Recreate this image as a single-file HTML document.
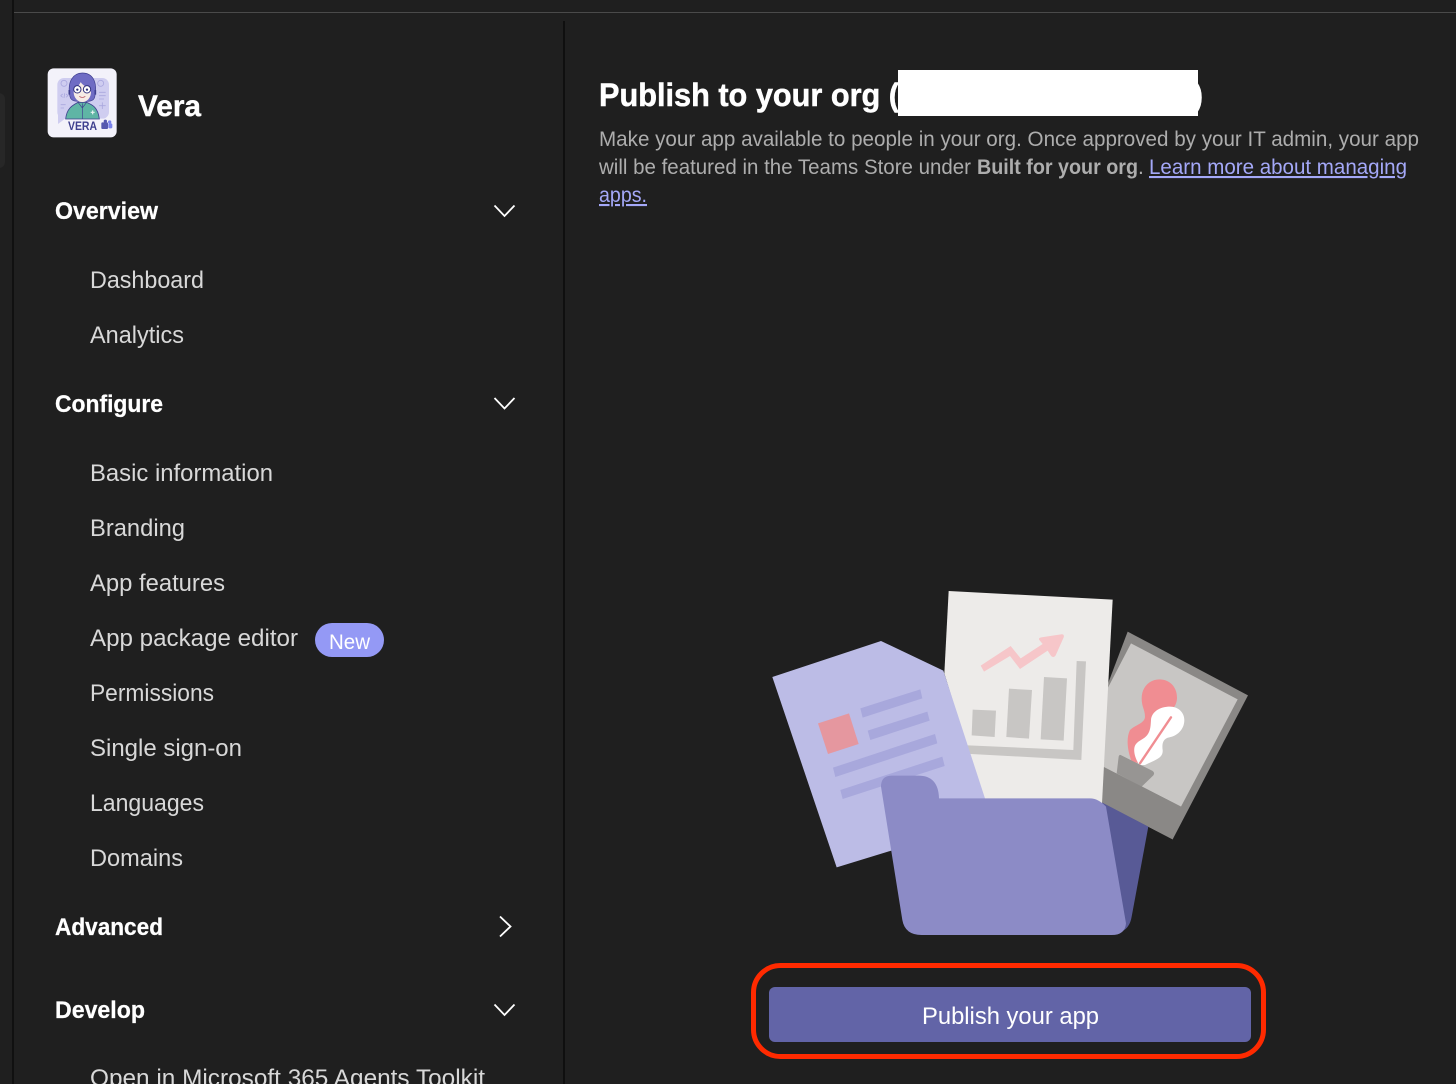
<!DOCTYPE html>
<html lang="en">
<head>
<meta charset="utf-8">
<title>Publish to your org</title>
<style>
html,body{margin:0;padding:0;background:#1f1f1f;width:1456px;height:1084px;overflow:hidden}
svg{display:block;font-family:"Liberation Sans",sans-serif}
.h{font-size:24px;font-weight:700;fill:#fff;stroke:#fff;stroke-width:.25px}
.i{font-size:24px;fill:#d8d8d8}
.p{font-size:21px;fill:#adadad}
.l{font-size:21px;fill:#a4a8f8;text-decoration:underline}
</style>
</head>
<body>
<svg width="1456" height="1084" viewBox="0 0 1456 1084" xmlns="http://www.w3.org/2000/svg">
<rect width="1456" height="1084" fill="#1f1f1f"/>
<!-- chrome -->
<rect x="-8" y="93" width="13" height="75" rx="6" fill="#272727"/>
<rect x="12" y="0" width="2" height="1084" fill="#101010"/>
<rect x="14" y="12" width="1442" height="1" fill="#4a4a4a"/>
<rect x="563" y="21" width="2" height="1063" fill="#0f0f0f"/>

<!-- logo -->
<g transform="translate(44 64) scale(0.33333)">
<rect x="11" y="13" width="207" height="207" rx="18" fill="#f3f2fa"/>
<rect x="40" y="42" width="155" height="122" rx="20" fill="#cfcdf0"/>
<path d="M42 140 L42 180 L66 162 Z" fill="#cfcdf0"/>
<g fill="none" stroke="#aaa8de" stroke-width="2.500">
<circle cx="60" cy="58" r="9"/>
<circle cx="170" cy="58" r="9"/>
<path d="M50 95 L56 90 M50 95 L56 100 M62 88 L60 102 M66 90 L72 95 L66 100"/>
<path d="M165 85 H185 M165 95 H185 M165 105 H180"/>
<path d="M50 122 H65 M50 132 H60"/>
<path d="M165 125 H185 M175 115 V135"/>
</g>
<path d="M65 165 C68 130 90 122 102 115 L128 115 C145 122 162 130 166 165 Z" fill="#5fb5a5" stroke="#3f3f8f" stroke-width="2.500"/>
<path d="M115 118 V165 M102 115 L115 132 L128 115" fill="none" stroke="#3f3f8f" stroke-width="2"/>
<path d="M140 145 H152 M146 139 V151" stroke="#e8f5f2" stroke-width="3.500"/>
<path d="M78 98 C68 50 90 27 115 27 C145 27 162 52 152 100 C148 114 130 112 115 112 C100 112 82 114 78 98Z" fill="#6f6cc4" stroke="#3f3f8f" stroke-width="2"/>
<ellipse cx="115" cy="84" rx="26" ry="30" fill="#f6ebe6"/>
<path d="M88 72 C92 48 110 42 122 44 C136 48 142 60 143 74 C128 70 116 64 110 54 C106 64 98 70 88 72Z" fill="#6f6cc4"/>
<circle cx="100" cy="76" r="11" fill="#fff" stroke="#33337e" stroke-width="3"/>
<circle cx="129" cy="76" r="11" fill="#fff" stroke="#33337e" stroke-width="3"/>
<circle cx="100" cy="77" r="3.500" fill="#33337e"/>
<circle cx="129" cy="77" r="3.500" fill="#33337e"/>
<path d="M106 97 Q115 104 124 97" fill="none" stroke="#b85a66" stroke-width="2.500"/>
<path d="M76 78 V92 M154 78 V92" stroke="#3f3f8f" stroke-width="5"/>
<rect x="172" y="175" width="20" height="20" rx="3" fill="#5558af"/>
<rect x="193" y="178" width="12" height="15" rx="4" fill="#7b83eb"/>
<circle cx="197" cy="174" r="5" fill="#7b83eb"/>
<circle cx="184" cy="172" r="5" fill="#5558af"/>
</g>
<text x="68" y="130" font-size="12" font-weight="700" fill="#3e3f8e" textLength="29" lengthAdjust="spacingAndGlyphs">VERA</text>

<text x="138" y="116" font-size="30" font-weight="700" fill="#fff" stroke="#fff" stroke-width=".4" textLength="63" lengthAdjust="spacingAndGlyphs">Vera</text>

<!-- nav -->
<text class="h" x="55" y="219" textLength="103" lengthAdjust="spacingAndGlyphs">Overview</text>
<text class="i" x="90" y="288" textLength="114" lengthAdjust="spacingAndGlyphs">Dashboard</text>
<text class="i" x="90" y="343" textLength="94" lengthAdjust="spacingAndGlyphs">Analytics</text>
<text class="h" x="55" y="412" textLength="108" lengthAdjust="spacingAndGlyphs">Configure</text>
<text class="i" x="90" y="481" textLength="183" lengthAdjust="spacingAndGlyphs">Basic information</text>
<text class="i" x="90" y="536" textLength="95" lengthAdjust="spacingAndGlyphs">Branding</text>
<text class="i" x="90" y="591" textLength="135" lengthAdjust="spacingAndGlyphs">App features</text>
<text class="i" x="90" y="646" textLength="208" lengthAdjust="spacingAndGlyphs">App package editor</text>
<rect x="315" y="623" width="69" height="34" rx="17" fill="#9499f5"/>
<text x="329" y="649" font-size="21" fill="#fff" textLength="41" lengthAdjust="spacingAndGlyphs">New</text>
<text class="i" x="90" y="701" textLength="124" lengthAdjust="spacingAndGlyphs">Permissions</text>
<text class="i" x="90" y="756" textLength="152" lengthAdjust="spacingAndGlyphs">Single sign-on</text>
<text class="i" x="90" y="811" textLength="114" lengthAdjust="spacingAndGlyphs">Languages</text>
<text class="i" x="90" y="866" textLength="93" lengthAdjust="spacingAndGlyphs">Domains</text>
<text class="h" x="55" y="935" textLength="108" lengthAdjust="spacingAndGlyphs">Advanced</text>
<text class="h" x="55" y="1018" textLength="90" lengthAdjust="spacingAndGlyphs">Develop</text>
<text class="i" x="90" y="1086" textLength="395" lengthAdjust="spacingAndGlyphs">Open in Microsoft 365 Agents Toolkit</text>

<!-- chevrons -->
<g fill="none" stroke="#fff" stroke-width="1.8">
<path d="M494.5 205.5 L504.5 216 L514.5 205.5"/>
<path d="M494.5 398 L504.5 408.500 L514.5 398"/>
<path d="M494.5 1004.500 L504.5 1015 L514.5 1004.500"/>
<path d="M500 916.500 L510.500 926.500 L500 936.500"/>
</g>

<!-- header -->
<text x="599" y="106" font-size="32" font-weight="700" fill="#fff" stroke="#fff" stroke-width=".5" textLength="300" lengthAdjust="spacingAndGlyphs">Publish to your org (</text>
<text x="1193" y="106" font-size="32" font-weight="700" fill="#fff" stroke="#fff" stroke-width=".5" textLength="10" lengthAdjust="spacingAndGlyphs">)</text>
<rect x="898" y="70" width="300" height="46" fill="#fff"/>

<text class="p" x="599" y="146" textLength="820" lengthAdjust="spacingAndGlyphs">Make your app available to people in your org. Once approved by your IT admin, your app</text>
<text class="p" x="599" y="174" textLength="372" lengthAdjust="spacingAndGlyphs">will be featured in the Teams Store under</text>
<text class="p" x="977" y="174" font-weight="700" textLength="161" lengthAdjust="spacingAndGlyphs">Built for your org</text>
<text class="p" x="1138" y="174">.</text>
<text class="l" x="1149" y="174" textLength="258" lengthAdjust="spacingAndGlyphs">Learn more about managing</text>
<text class="l" x="599" y="202" textLength="48" lengthAdjust="spacingAndGlyphs">apps.</text>

<!-- illustration -->
<g transform="translate(750 580) scale(0.33333)">
<polygon points="1133,155 1494,346 1268,778 1000,640 1040,400" fill="#8a8886"/>
<polygon points="1143,190 1463,358 1293,680 1040,550 1060,350" fill="#c8c6c4"/>
<g transform="translate(1020 150)">
<path d="M155,205 C155,170 180,148 208,148 C240,148 262,172 261,205 C260,225 250,235 240,245 L150,400 L125,395 C112,360 108,325 120,300 C135,285 165,280 165,260 C165,240 155,230 155,205Z" fill="#f08d92"/>
<path d="M183,270 C185,245 210,230 240,230 C265,230 283,248 283,270 C283,300 260,318 238,322 C220,325 215,340 218,360 C220,385 195,390 165,405 L148,405 C135,385 128,360 136,345 C145,330 165,328 175,310 C182,298 182,285 183,270Z" fill="#fff"/>
<path d="M243,262 L150,400" stroke="#f08d92" stroke-width="7" stroke-linecap="round" fill="none"/>
<path d="M92,375 L186,422 Q196,428 190,436 L155,470 L80,430 L86,380 Q88,373 92,375Z" fill="#979593"/>
</g>
<polygon points="1040,550 1293,680 1268,778 1040,660" fill="#8a8886"/>

<polygon points="596,33 1088,59 1056,670 700,660 583,280" fill="#edebe9"/>
<g transform="translate(630 120)">
<path d="M62,137 L152,78 L182,115 L248,72 L238,60 Q234,54 244,52 L303,43 Q314,42 311,52 L287,106 Q280,117 272,106 L263,92 L180,147 L150,108 L72,155 Z" fill="#f6c6c9"/>
<polygon points="38,269 108,272 104,351 35,346" fill="#c8c6c4"/>
<polygon points="147,206 216,210 207,356 139,351" fill="#c8c6c4"/>
<polygon points="252,171 321,175 311,362 242,358" fill="#c8c6c4"/>
<polygon points="350,123 378,124 364,420 0,400 0,375 340,390" fill="#c8c6c4"/>
</g>

<polygon points="67,291 393,183 580,272 705,655 430,810 260,862" fill="#bcbce6"/>
<polygon points="204,430 297,400 326,492 234,522" fill="#e5979f"/>
<g fill="#a8a8dc">
<polygon points="331,385 511,328 517,355 338,413"/>
<polygon points="353,452 532,395 539,422 361,480"/>
<polygon points="249,563 555,462 562,490 256,591"/>
<polygon points="271,630 577,530 584,558 278,657"/>
</g>
<path d="M1057,668 L1195,740 L1145,1010 Q1140,1040 1120,1052 L1000,800 Z" fill="#585a96"/>
<path d="M393,620 Q393,587 425,587 L505,587 Q565,587 567,655 L1020,655 Q1045,655 1068,680 L1128,1030 Q1125,1065 1085,1065 L515,1065 Q465,1065 457,1020 Z" fill="#8c8bc6"/>
</g>

<!-- button -->
<rect x="753.500" y="965.500" width="510" height="91" rx="27" fill="none" stroke="#ff2a00" stroke-width="5"/>
<rect x="769" y="987" width="482" height="55" rx="6" fill="#6264a7"/>
<text x="922" y="1024" font-size="24" fill="#fff" textLength="177" lengthAdjust="spacingAndGlyphs">Publish your app</text>
</svg>
</body>
</html>
